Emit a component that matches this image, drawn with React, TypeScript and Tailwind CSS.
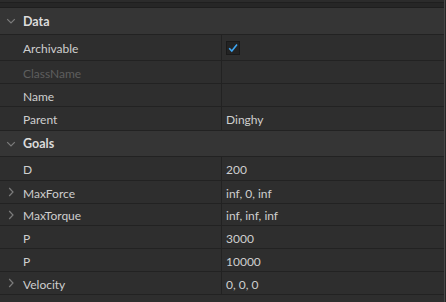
import React from "react";

const Chevron = ({ open }: { open: boolean }) =>
  open ? (
    <svg width="10" height="10" viewBox="0 0 10 10" className="shrink-0">
      <path d="M1.2 3.2 L5 7 L8.8 3.2" stroke="#7c7c7c" strokeWidth="1.2" fill="none" />
    </svg>
  ) : (
    <svg width="10" height="10" viewBox="0 0 10 10" className="shrink-0">
      <path d="M3.2 1 L7 5 L3.2 9" stroke="#7c7c7c" strokeWidth="1.2" fill="none" />
    </svg>
  );

const Header = ({ label, h }: { label: string; h: string }) => (
  <div className={`flex items-center ${h} bg-[#353535] border-b border-[#222222] pl-[6px]`}>
    <Chevron open />
    <span className="ml-[7px] pt-[2px] font-bold text-[#dcdcdc] text-[12.5px]">{label}</span>
  </div>
);

const Row = ({
  name,
  value,
  expandable,
  dim,
  h,
}: {
  name: string;
  value?: React.ReactNode;
  expandable?: boolean;
  dim?: boolean;
  h: string;
}) => (
  <div className={`flex ${h} bg-[#2e2e2e] border-b border-[#222222]`}>
    <div className="flex items-center w-[222px] border-r border-[#222222] pl-[6px]">
      <div className="w-[10px] flex justify-center">{expandable ? <Chevron open={false} /> : null}</div>
      <span className={`ml-[7px] pt-[3px] ${dim ? "text-[#5e5e5e]" : "text-[#cfcfcf]"}`}>{name}</span>
    </div>
    <div className="flex items-center pl-[4px] text-[#cfcfcf]">
      {typeof value === "string" ? <span className="pt-[3px]">{value}</span> : value}
    </div>
  </div>
);

const Check = () => (
  <div className="w-[14px] h-[14px] bg-[#232323] border border-[#1a1a1a] flex items-center justify-center">
    <svg width="12" height="12" viewBox="0 0 12 12">
      <path d="M2.2 6.2 L4.8 9 L10 2.6" stroke="#3ea6f2" strokeWidth="1.6" fill="none" />
    </svg>
  </div>
);

export default function App() {
  return (
    <div
      className="w-[446px] h-[302px] bg-[#2e2e2e] overflow-hidden text-[12px] leading-none"
      style={{ fontFamily: 'Lato, "Noto Sans", sans-serif' }}
    >
      <div className="flex h-[302px]">
        <div className="flex-1 flex flex-col border-r border-[#474747]">
          <div className="h-[8px] bg-[#262626] border-b border-[#1e1e1e] flex flex-col">
            <div className="h-[3px] bg-[#2b2b2b] border-b border-[#1f1f1f]" />
          </div>
          <Header label="Data" h="h-[27px]" />
          <Row name="Archivable" value={<Check />} h="h-[26px]" />
          <Row name="ClassName" dim h="h-[23px]" />
          <Row name="Name" h="h-[23px]" />
          <Row name="Parent" value="Dinghy" h="h-[24px]" />
          <Header label="Goals" h="h-[26px]" />
          <Row name="D" value="200" h="h-[24px]" />
          <Row name="MaxForce" value="inf, 0, inf" expandable h="h-[23px]" />
          <Row name="MaxTorque" value="inf, inf, inf" expandable h="h-[22px]" />
          <Row name="P" value="3000" h="h-[23px]" />
          <Row name="P" value="10000" h="h-[23px]" />
          <Row name="Velocity" value="0, 0, 0" expandable h="h-[23px]" />
          <div className="flex-1 bg-[#2e2e2e]" />
        </div>
        <div className="w-[1px] bg-[#262626]" />
      </div>
    </div>
  );
}
